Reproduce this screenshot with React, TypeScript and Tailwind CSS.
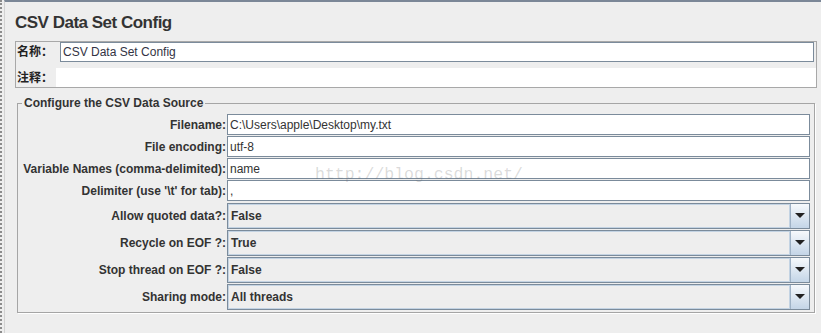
import { ReactNode } from "react";

const font = "font-['Liberation_Sans',Arial,'Noto_Sans_CJK_SC',sans-serif]";

function TextRow({ label, value }: { label: string; value: string }) {
  return (
    <>
      <div className="flex h-[21px] items-center justify-end pr-[1px] text-[12px] font-bold text-[#333]">
        {label}
      </div>
      <div className="flex h-[21px] items-center border border-[#7b8b9b] bg-white pl-[2px] text-[12px] text-[#333]">
        {value}
      </div>
    </>
  );
}

function ComboRow({ label, value, first }: { label: string; value: string; first?: boolean }) {
  return (
    <>
      <div
        className={`flex h-[26px] items-center justify-end pr-[1px] text-[12px] font-bold text-[#333] ${
          first ? "mt-[1px]" : ""
        }`}
      >
        {label}
      </div>
      <div className={`flex h-[26px] border border-[#7b8b9b] bg-[#eeeeee] ${first ? "mt-[1px]" : ""}`}>
        <div className="flex flex-1 items-center border border-[#c3d3e3] pl-[2px] text-[12px] font-bold text-[#333]">
          {value}
        </div>
        <div className="flex w-[19px] items-center justify-center border-l border-[#9fb2c6] bg-gradient-to-b from-[#f6f9fc] to-[#c4d5e7]">
          <svg width="10" height="6" viewBox="0 0 10 6">
            <path d="M0 0H10L5 5Z" fill="#222" />
          </svg>
        </div>
      </div>
    </>
  );
}

function Label({ children, w }: { children: ReactNode; w: string }) {
  return (
    <div className={`${w} flex items-center pl-[1px] text-[12px] font-bold text-[#222]`}>{children}</div>
  );
}

export default function App() {
  return (
    <div className={`relative flex h-[333px] w-[821px] overflow-hidden bg-[#eeeeee] ${font}`}>
      <div className="w-[4px] border-l-2 border-dotted border-[#8c8c8c]" />

      <div className="flex-1 border-l border-t-2 border-l-[#d2d2d2] border-t-[#7b8797] pl-[10px]">
        <h1 className="mt-[11px] h-[20px] text-[17px] font-bold leading-[20px] tracking-[-0.5px] text-[#333]">
          CSV Data Set Config
        </h1>

        <div className="mt-[8px] flex w-[802px] flex-col gap-[6px] border border-[#a8a8a8]">
          <div className="flex h-[20px]">
            <Label w="w-[44px]">名称：</Label>
            <div className="flex w-[754px] items-center border border-[#7b8b9b] bg-white pl-[2px] text-[12px] text-[#333344]">
              CSV Data Set Config
            </div>
          </div>
          <div className="flex h-[19px]">
            <Label w="w-[40px]">注释：</Label>
            <div className="flex-1 bg-white" />
          </div>
        </div>

        <fieldset className="ml-[2px] mt-[8px] w-[798px] border border-[#a5a5a5] px-0 pb-[2px] pt-[4px] shadow-[1px_1px_0_#fff]">
          <legend className="ml-[4px] px-[2px] text-[12px] font-bold leading-[14px] text-[#333]">
            Configure the CSV Data Source
          </legend>
          <div className="grid grid-cols-[209px_583px] gap-y-[1px]">
            <TextRow label="Filename:" value="C:\Users\apple\Desktop\my.txt" />
            <TextRow label="File encoding:" value="utf-8" />
            <TextRow label="Variable Names (comma-delimited):" value="name" />
            <TextRow label="Delimiter (use '\t' for tab):" value="," />
            <ComboRow label="Allow quoted data?:" value="False" first />
            <ComboRow label="Recycle on EOF ?:" value="True" />
            <ComboRow label="Stop thread on EOF ?:" value="False" />
            <ComboRow label="Sharing mode:" value="All threads" />
          </div>
        </fieldset>
      </div>

      <span className="pointer-events-none absolute left-[315px] top-[166px] font-['Liberation_Mono',monospace] text-[16.5px] leading-[17px] text-[rgba(110,110,110,0.25)]">
        http://blog.csdn.net/
      </span>
    </div>
  );
}
